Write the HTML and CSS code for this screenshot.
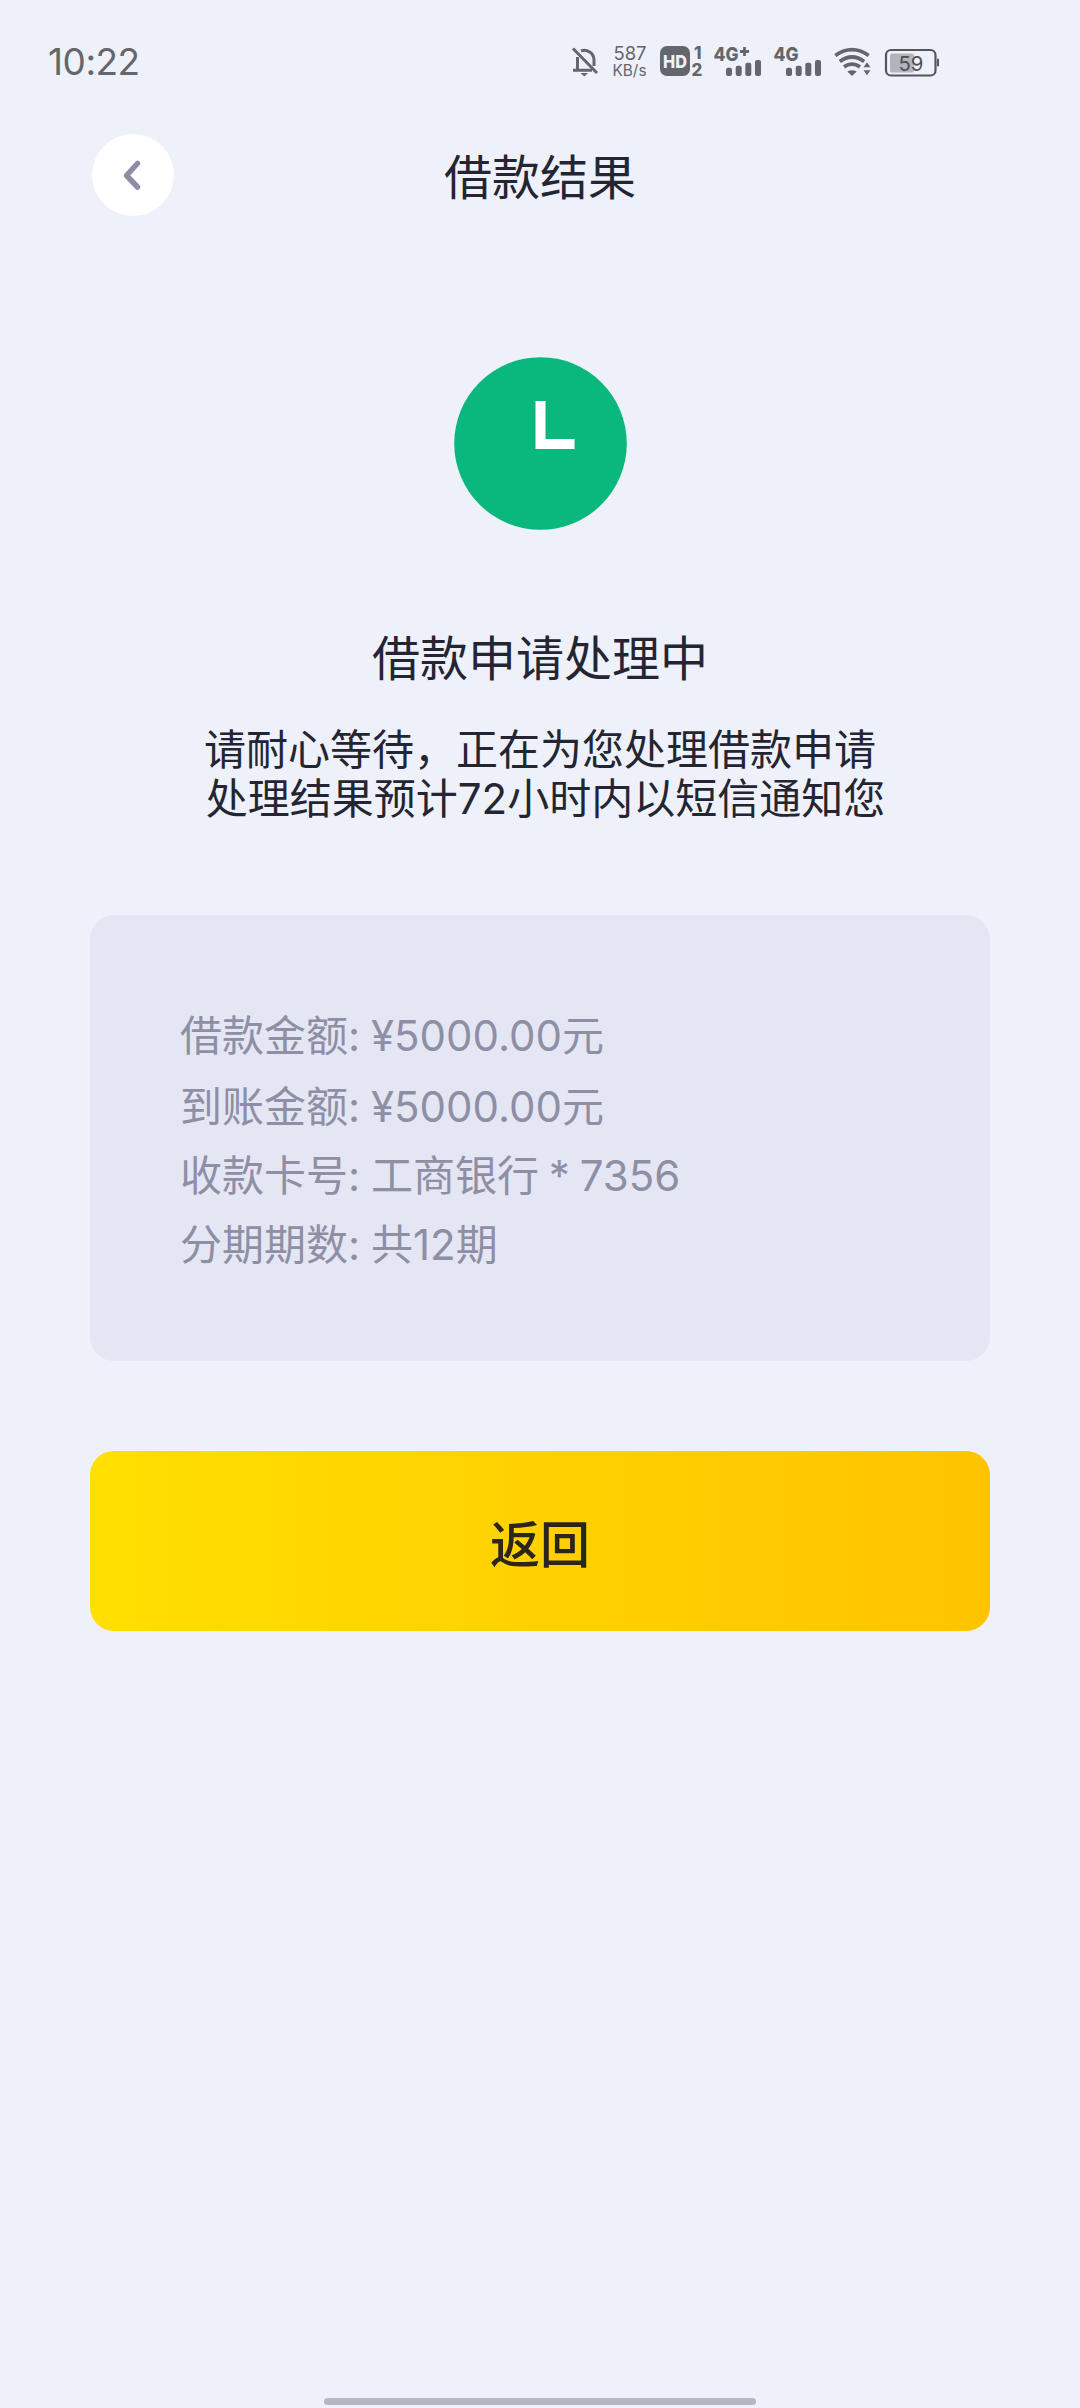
FILE: index.html
```html
<!DOCTYPE html>
<html lang="zh-CN">
<head>
<meta charset="utf-8">
<title>借款结果</title>
<link rel="stylesheet" href="styles.css">
</head>
<body>
<div class="screen">
  <header class="status">
    <span class="clock">10:22</span>
    <svg class="status-icons" viewBox="560 36 400 50" width="400" height="50">
      <g fill="none" stroke="#65666c" stroke-width="3">
        <path d="M573 48.5L597 73"/>
        <path d="M577.5 57V69.5M573 70.2H592"/>
        <path d="M581 50.8C587 48.5 594 53 594 60V66"/>
      </g>
      <path d="M580.5 73h7.5l-3.7 3.6z" fill="#65666c"/>
      <g class="net">
        <text x="613.5" y="60" font-size="19" textLength="33" lengthAdjust="spacingAndGlyphs">587</text>
        <text x="612.5" y="76" font-size="15.5" textLength="34" lengthAdjust="spacingAndGlyphs">KB/s</text>
      </g>
      <rect x="660" y="46" width="30" height="30" rx="7" fill="#65666c"/>
      <g class="bold">
        <text class="hd" x="663" y="67.5" font-size="18" textLength="24" lengthAdjust="spacingAndGlyphs">HD</text>
        <text x="694" y="58.5" font-size="17">1</text>
        <text x="691.5" y="75.7" font-size="17">2</text>
        <text x="713.5" y="60.7" font-size="19" textLength="25" lengthAdjust="spacingAndGlyphs">4G</text>
        <text x="773.5" y="60.7" font-size="19" textLength="25" lengthAdjust="spacingAndGlyphs">4G</text>
      </g>
      <path d="M740 51.5h9M744.5 47v9" stroke="#65666c" stroke-width="2.8"/>
      <g fill="#65666c">
        <rect x="726" y="67.7" width="6" height="8.3" rx="2"/><rect x="735.7" y="65.7" width="6" height="10.3" rx="2"/><rect x="745.3" y="62.7" width="6" height="13.3" rx="2"/><rect x="755" y="60" width="6" height="16" rx="2"/>
        <rect x="786" y="67.7" width="6" height="8.3" rx="2"/><rect x="795.7" y="65.7" width="6" height="10.3" rx="2"/><rect x="805.3" y="62.7" width="6" height="13.3" rx="2"/><rect x="815" y="60" width="6" height="16" rx="2"/>
        <path d="M847.3 71.5Q852 69 856.7 71.5L852 76z"/>
        <path d="M863.5 67.3l3.5-5 3.5 5zM863.5 70.3l3.5 5 3.5-5z"/>
      </g>
      <g fill="none" stroke="#65666c" stroke-width="3.8">
        <path d="M835.3 55.5Q852 43.8 868.7 55.5"/>
        <path d="M839.8 61.5Q852 52.5 864.2 61.5"/>
        <path d="M844 66.8Q852 61.5 860 66.8"/>
      </g>
      <rect x="890" y="53.5" width="24" height="19" rx="2" fill="#b3b4ba"/>
      <rect x="886" y="50" width="49.5" height="25.5" rx="5" fill="none" stroke="#55565c" stroke-width="2.2"/>
      <rect x="937" y="58.5" width="2" height="8" rx="1" fill="#55565c"/>
      <text class="battery" x="898.5" y="70.5" font-size="20" textLength="25" lengthAdjust="spacingAndGlyphs">59</text>
    </svg>
  </header>

  <nav class="navbar">
    <button class="back" aria-label="返回">
      <svg viewBox="0 0 82 82" width="82" height="82"><path d="M45.5 29.5L34.5 41.5L45.5 53" fill="none" stroke="#8e8ca6" stroke-width="5.5" stroke-linecap="round" stroke-linejoin="round"/></svg>
    </button>
    <h1 class="title">借款结果</h1>
  </nav>

  <main class="content">
    <svg class="result-icon" viewBox="0 0 173 173" width="173" height="173">
      <circle cx="86.5" cy="86.5" r="86.3" fill="#0ab87d"/>
      <path d="M81.5 44h10v38h29v10h-39z" fill="#fff"/>
    </svg>
    <h2 class="heading">借款申请处理中</h2>
    <p class="message"><span>请耐心等待，正在为您处理借款申请</span><span class="second">处理结果预计72小时内以短信通知您</span></p>
    <dl class="card">
      <div class="row"><dt>借款金额:</dt><dd>¥5000.00元</dd></div>
      <div class="row"><dt>到账金额:</dt><dd>¥5000.00元</dd></div>
      <div class="row"><dt>收款卡号:</dt><dd class="bank">工商银行 * 7356</dd></div>
      <div class="row"><dt>分期期数:</dt><dd>共12期</dd></div>
    </dl>
    <button class="submit">返回</button>
  </main>
  <div class="home-bar"></div>
</div>
</body>
</html>
```

FILE: styles.css
```css
* { box-sizing: border-box; margin: 0; padding: 0; }

body {
  background: #eef1fa;
  color: #232632;
  font-family: Inter, "Noto Sans CJK SC", sans-serif;
}

.screen {
  width: 1080px;
  height: 2408px;
  display: flex;
  flex-direction: column;
}

.status {
  height: 134px;
  padding: 36px 120px 0 48px;
  display: flex;
  justify-content: space-between;
  align-items: flex-start;
}

.clock {
  font-size: 37px;
  line-height: 51px;
  letter-spacing: -0.5px;
  color: #65666c;
}

.status-icons { display: block; }
.status-icons text { font-family: Inter, sans-serif; fill: #65666c; }
.status-icons .bold text { font-weight: 800; }
.status-icons .bold .hd { fill: #eef1fa; }
.status-icons .battery { fill: #4d4e54; }

.navbar {
  height: 82px;
  padding: 0 92px;
  display: grid;
  grid-template-columns: 82px 1fr 82px;
  align-items: center;
}

button { border: 0; font-family: inherit; }

.back {
  width: 82px;
  height: 82px;
  border-radius: 50%;
  background: #fff;
}

.back svg { display: block; }

.title, .heading {
  font-size: 48px;
  line-height: 72px;
  font-weight: 400;
  text-align: center;
}

.title { padding-top: 5px; }

.content {
  padding: 141px 90px 0;
  display: flex;
  flex-direction: column;
  align-items: center;
}

.heading { margin-top: 93px; }

.message {
  margin-top: 30px;
  display: flex;
  flex-direction: column;
  align-items: center;
  font-size: 42px;
  line-height: 49px;
  white-space: nowrap;
}

.second { padding-left: 11px; }

.card {
  width: 900px;
  height: 446px;
  margin-top: 92px;
  padding: 86px 90px 0;
  border-radius: 24px;
  background: #e4e6f4;
  color: #8e8fa4;
  font-size: 42px;
}

.row {
  display: grid;
  grid-template-columns: 191px 1fr;
  line-height: 69px;
}

.row:first-child { margin-bottom: 2px; }

.bank { word-spacing: -2px; }

.submit {
  width: 900px;
  height: 180px;
  margin-top: 90px;
  border-radius: 24px;
  background: linear-gradient(90deg, #ffdf00, #ffc300);
  color: #2b2618;
  font-size: 50px;
  font-weight: 500;
}

.home-bar {
  width: 432px;
  height: 7px;
  margin: auto auto 3px;
  border-radius: 4px;
  background: #b6b7c2;
}
```
